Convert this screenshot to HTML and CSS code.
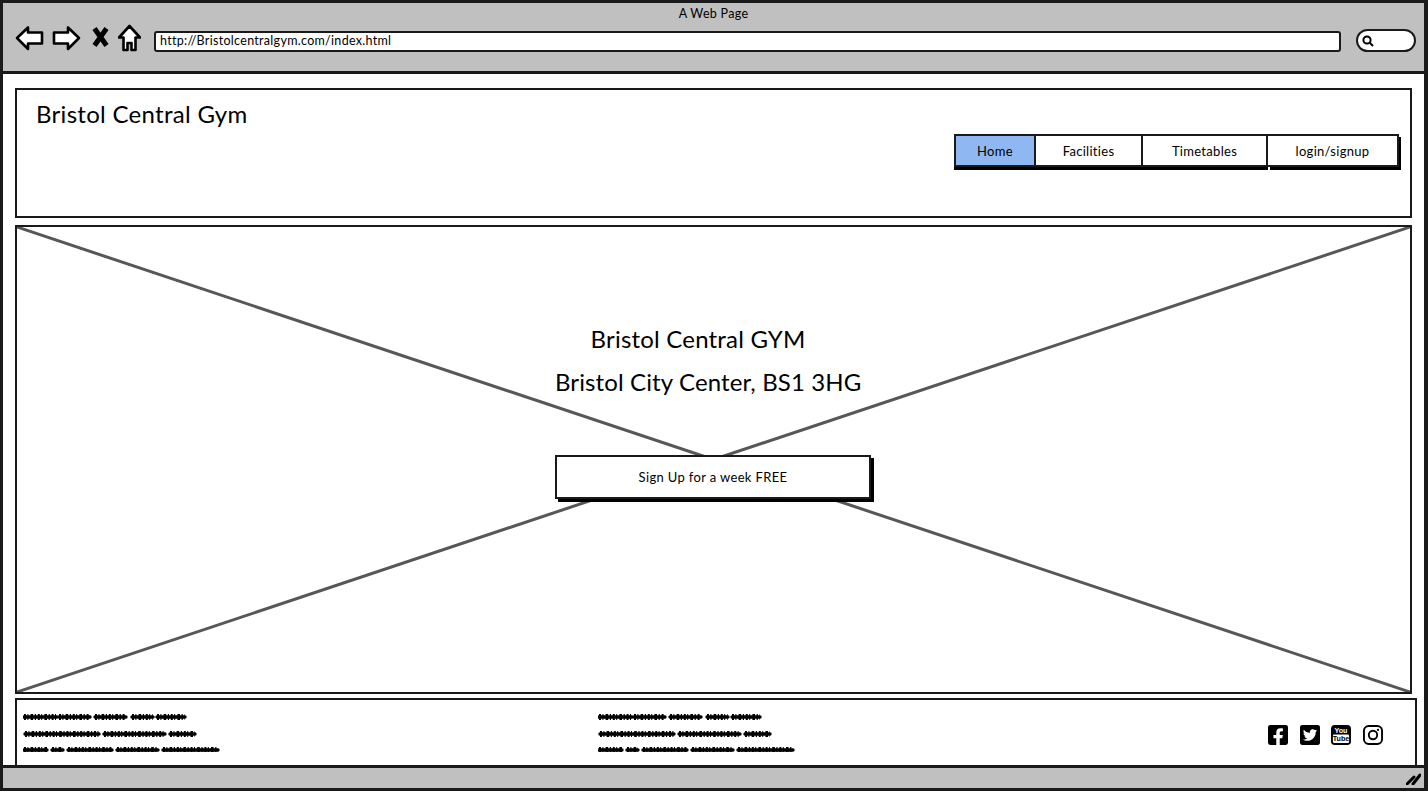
FILE: index.html

```html
<!DOCTYPE html>
<html lang="en">
<head>
    <meta charset="UTF-8">
    <meta name="viewport" content="width=device-width, initial-scale=1.0">
    <title>A Web Page</title>
    <link rel="stylesheet" href="styles.css">
</head>
<body>
    <svg class="defs" width="0" height="0">
        <symbol id="scribble" viewBox="0 0 200 40">
            <path class="scribble-base" d="M1 5H34M36 5H67M72 5H103M109 5H130M134 5H162M2 22H76M81 22H142M147 22H172M1 38H24M29 38H40M45 38H89M94 38H135M140 38H195"/>
            <path class="scribble-dash" d="M1 5H34M36 5H67M72 5H103M109 5H130M134 5H162M2 22H76M81 22H142M147 22H172M1 38H24M29 38H40M45 38H89M94 38H135M140 38H195"/>
        </symbol>
    </svg>

    <div class="window">
        <div class="toolbar">
            <div class="window-title">A Web Page</div>
            <div class="toolbar-row">
                <!-- back / forward / stop / home -->
                <svg class="tool-icon" width="29" height="26" viewBox="0 0 29 26">
                    <path d="M2 13L13 2.5V7.5H27V18.5H13V24Z"/>
                </svg>
                <svg class="tool-icon" width="29" height="26" viewBox="0 0 29 26">
                    <path d="M27 13L16 2.5V7.5H2V18.5H16V24Z"/>
                </svg>
                <svg class="tool-stop" width="17" height="20" viewBox="0 0 17 20">
                    <path d="M2.5 1.5L14.5 18.5M14.5 1.5L2.5 18.5"/>
                </svg>
                <svg class="tool-icon tool-home" width="23" height="28" viewBox="0 0 23 28">
                    <path d="M11.5 2L22 13.5H17.5V26H13.5V19H9.5V26H5.5V13.5H1Z"/>
                </svg>
                <div class="address-bar">http://Bristolcentralgym.com/index.html</div>
                <div class="search-pill">
                    <svg width="14" height="14" viewBox="0 0 14 14">
                        <circle cx="6" cy="6" r="3.6"/>
                        <path d="M8.8 8.8L12 12"/>
                    </svg>
                </div>
            </div>
        </div>

        <div class="content">
            <header class="site-header">
                <div class="site-name">Bristol Central Gym</div>
                <nav class="tabs">
                    <a class="tab tab-home active">Home</a>
                    <a class="tab tab-facilities">Facilities</a>
                    <a class="tab tab-timetables">Timetables</a>
                    <a class="tab tab-login">login/signup</a>
                </nav>
            </header>

            <section class="hero">
                <svg class="hero-cross" viewBox="0 0 100 100" preserveAspectRatio="none">
                    <line x1="0" y1="0" x2="100" y2="100"/>
                    <line x1="100" y1="0" x2="0" y2="100"/>
                </svg>
                <div class="hero-copy">
                    <h1 class="hero-title">Bristol Central GYM</h1>
                    <h2 class="hero-place">Bristol City Center, BS1 3HG</h2>
                    <a class="hero-button">Sign Up for a week FREE</a>
                </div>
            </section>

            <footer class="site-footer">
                <svg class="scribble scribble-left"><use href="#scribble"/></svg>
                <svg class="scribble scribble-mid"><use href="#scribble"/></svg>
                <div class="social">
                    <svg class="social-icon" viewBox="0 32 448 448">
                        <path d="M400 32H48A48 48 0 0 0 0 80v352a48 48 0 0 0 48 48h137.25V327.69h-63V256h63v-54.64c0-62.15 37-96.48 93.67-96.48 27.14 0 55.52 4.84 55.52 4.84v61h-31.27c-30.81 0-40.42 19.12-40.42 38.73V256h68.78l-11 71.69h-57.78V480H400a48 48 0 0 0 48-48V80a48 48 0 0 0-48-48z"/>
                    </svg>
                    <svg class="social-icon" viewBox="0 32 448 448">
                        <path d="M400 32H48C21.5 32 0 53.5 0 80v352c0 26.5 21.5 48 48 48h352c26.5 0 48-21.5 48-48V80c0-26.5-21.5-48-48-48zm-48.9 158.8c.2 2.8.2 5.7.2 8.5 0 86.7-66 186.6-186.6 186.6-37.2 0-71.7-10.8-100.7-29.4 5.3.6 10.4.8 15.8.8 30.7 0 58.9-10.4 81.4-28-28.8-.6-53-19.5-61.3-45.5 10.1 1.5 19.2 1.5 29.6-1.2-30-6.1-52.5-32.5-52.5-64.4v-.8c8.7 4.9 18.9 7.9 29.6 8.3a65.447 65.447 0 0 1-29.2-54.6c0-12.2 3.2-23.4 8.9-33.1 32.3 39.8 80.8 65.8 135.2 68.6-9.3-44.5 24-80.6 64-80.6 18.9 0 35.9 7.9 47.9 20.7 14.8-2.8 29-8.3 41.6-15.8-4.9 15.2-15.1 28-28.7 36 13.2-1.4 26-5.1 37.8-10.2-8.9 13.1-20.1 24.7-32.9 34z"/>
                    </svg>
                    <svg class="social-icon youtube" viewBox="0 0 21 21">
                        <rect class="yt-back" width="21" height="21" rx="4"/>
                        <rect class="yt-panel" x="2" y="10" width="17" height="9" rx="1.5"/>
                        <text class="yt-you" x="10.5" y="8.5">You</text>
                        <text class="yt-tube" x="10.5" y="17.3">Tube</text>
                    </svg>
                    <svg class="social-icon instagram" viewBox="0 0 21 21">
                        <rect x="1" y="1" width="19" height="19" rx="5"/>
                        <circle cx="10.5" cy="10.5" r="4.4"/>
                        <circle class="insta-dot" cx="15.8" cy="5.2" r="1.2"/>
                    </svg>
                </div>
            </footer>
        </div>

        <div class="statusbar">
            <svg class="resize-grip" width="15" height="13" viewBox="0 0 15 13">
                <path d="M1 12L8 5M7 12L14 3"/>
            </svg>
        </div>
    </div>
</body>
</html>
```

FILE: styles.css

```css
* {
    box-sizing: border-box;
}

body {
    margin: 0;
    font-family: Lato, "Liberation Sans", sans-serif;
    color: #000;
    background-color: #fff;
}

.defs {
    display: block;
    height: 0;
}

.window {
    width: 1428px;
    height: 791px;
    border: 3px solid #1a1a1a;
    border-right-width: 4px;
    display: flex;
    flex-direction: column;
    overflow: hidden;
}

/* browser chrome */
.toolbar {
    height: 71px;
    flex: none;
    background-color: #c0c0c0;
    border-bottom: 3px solid #1a1a1a;
}

.window-title {
    height: 21px;
    padding-top: 3px;
    text-align: center;
    font-size: 12.5px;
    line-height: 16px;
    letter-spacing: 0.3px;
}

.toolbar-row {
    display: flex;
    align-items: center;
    padding-left: 12px;
    height: 28px;
}

.tool-icon path {
    fill: #fff;
    stroke: #000;
    stroke-width: 2.6;
    stroke-linejoin: round;
}

.tool-icon {
    margin-right: 8px;
    flex: none;
}

.tool-icon + .tool-stop {
    margin-left: 3px;
}

.tool-stop {
    margin-right: 9px;
    margin-top: -3px;
    flex: none;
}

.tool-stop path {
    fill: none;
    stroke: #000;
    stroke-width: 5;
}

.address-bar {
    width: 1187px;
    height: 21px;
    margin-left: 5px;
    margin-top: 6px;
    padding-left: 4px;
    background-color: #fff;
    border: 2.5px solid #1a1a1a;
    border-radius: 3px;
    font-size: 12.5px;
    line-height: 15px;
    letter-spacing: 0.3px;
}

.search-pill {
    width: 60px;
    height: 23px;
    margin-left: 15px;
    margin-top: 5px;
    padding: 3px 0 0 3px;
    background-color: #fff;
    border: 2.5px solid #1a1a1a;
    border-radius: 12px;
}

.search-pill svg {
    display: block;
}

.search-pill circle,
.search-pill path {
    fill: none;
    stroke: #000;
    stroke-width: 2;
}

/* page body */
.content {
    flex: 1;
    display: flex;
    flex-direction: column;
    gap: 7px;
    padding: 14px 0 0 12px;
}

.site-header {
    height: 130px;
    margin-right: 12px;
    padding: 10px 11px 0 19px;
    flex: none;
    border: 2.5px solid #1a1a1a;
}

.site-name {
    font-size: 24px;
    line-height: 27px;
    letter-spacing: 0.3px;
}

.tabs {
    display: flex;
    justify-content: flex-end;
    height: 35px;
    margin-top: 7px;
}

.tab {
    display: flex;
    align-items: center;
    justify-content: center;
    height: 33px;
    background-color: #fff;
    border: 2px solid #1a1a1a;
    border-left-width: 0;
    box-shadow: 0 3px 0 #000;
    font-size: 13px;
    letter-spacing: 0.3px;
}

.tab-home {
    width: 82px;
    border-left-width: 2px;
}

.tab-facilities {
    width: 107px;
}

.tab-timetables {
    width: 125px;
}

.tab-login {
    width: 131px;
    box-shadow: 2px 3px 0 #000;
}

.tab.active {
    background-color: #8fb7f1;
}

.hero {
    position: relative;
    height: 469px;
    margin-right: 12px;
    padding: 98px 0 0 538px;
    flex: none;
    border: 2.5px solid #1a1a1a;
}

.hero-cross {
    position: absolute;
    left: 0;
    top: 0;
    width: 100%;
    height: 100%;
}

.hero-cross line {
    stroke: #575757;
    stroke-width: 3;
    vector-effect: non-scaling-stroke;
}

.hero-copy {
    position: relative;
    width: 320px;
}

.hero-title,
.hero-place {
    margin: 0;
    font-weight: 400;
    font-size: 24px;
    line-height: 28px;
    width: 306px;
    text-align: center;
    white-space: nowrap;
}

.hero-title {
    padding-right: 20px;
    letter-spacing: 0.2px;
}

.hero-place {
    margin-top: 15px;
    letter-spacing: 0.12px;
}

.hero-button {
    display: flex;
    align-items: center;
    justify-content: center;
    width: 316px;
    height: 44px;
    margin-top: 59px;
    background-color: #fff;
    border: 2px solid #1a1a1a;
    box-shadow: 3px 3px 0 #000;
    font-size: 13px;
    letter-spacing: 0.35px;
}

.site-footer {
    display: flex;
    align-items: center;
    height: 67px;
    margin-top: -3px;
    margin-right: 7px;
    flex: none;
    border: 2.5px solid #1a1a1a;
    border-bottom-width: 0;
}

.scribble {
    width: 200px;
    height: 40px;
    flex: none;
    margin-top: -2px;
}

.scribble-left {
    margin-left: 6px;
}

.scribble-mid {
    margin-left: 375px;
}

.scribble-base {
    fill: none;
    stroke: #000;
    stroke-width: 3.4;
    stroke-linecap: round;
}

.scribble-dash {
    fill: none;
    stroke: #000;
    stroke-width: 6;
    stroke-dasharray: 2 1.4 1 2.2 2.6 1.6 1.2 1.8;
}

.social {
    display: flex;
    gap: 11.5px;
    margin-left: 470px;
    margin-top: 5px;
}

.social-icon {
    display: block;
    width: 20px;
    height: 20px;
}

.yt-back {
    fill: #000;
}

.yt-panel {
    fill: #fff;
}

.yt-you,
.yt-tube {
    font-family: "Liberation Sans", sans-serif;
    font-size: 7.5px;
    font-weight: 700;
    text-anchor: middle;
}

.yt-you {
    fill: #fff;
}

.yt-tube {
    fill: #000;
}

.instagram rect,
.instagram circle {
    fill: none;
    stroke: #000;
    stroke-width: 2;
}

.instagram .insta-dot {
    fill: #000;
    stroke: none;
}

.statusbar {
    height: 24px;
    flex: none;
    display: flex;
    align-items: center;
    justify-content: flex-end;
    padding-right: 3px;
    background-color: #c0c0c0;
    border-top: 3px solid #1a1a1a;
}

.resize-grip path {
    fill: none;
    stroke: #000;
    stroke-width: 3;
    stroke-linecap: round;
}
```
